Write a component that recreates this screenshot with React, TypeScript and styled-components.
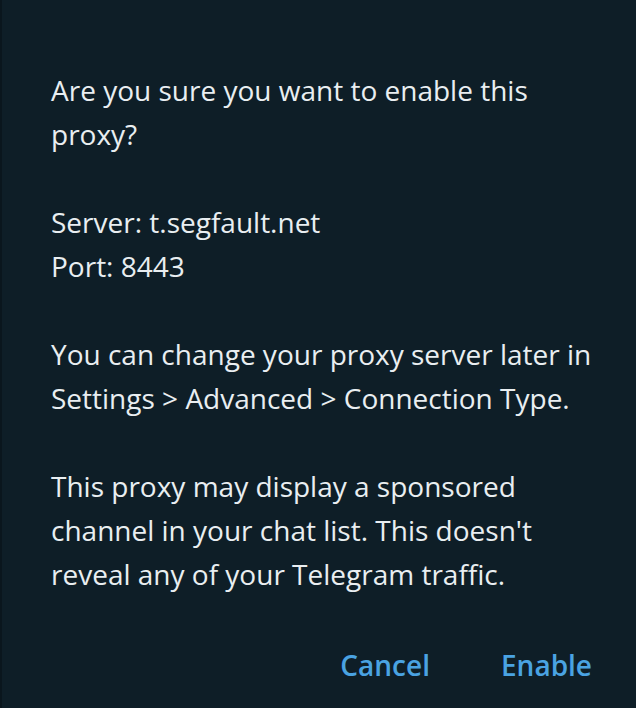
import React from "react";
import styled, { createGlobalStyle } from "styled-components";

const Global = createGlobalStyle`
  html, body { margin: 0; padding: 0; background: #0e1e27; }
  body { font-family: "Open Sans", "Noto Sans", sans-serif; }
`;

const Dialog = styled.div`
  width: 636px;
  height: 708px;
  box-sizing: border-box;
  background: #0e1e27;
  border-left: 2px solid #0a161d;
  display: flex;
  flex-direction: column;
`;

const Body = styled.div`
  padding: 68px 40px 0 49px;
  display: flex;
  flex-direction: column;
  gap: 44px;
`;

const Para = styled.p`
  margin: 0;
  font-size: 28px;
  line-height: 44px;
  color: #e9eef1;
`;

const Actions = styled.div`
  margin-top: 47px;
  display: flex;
  justify-content: flex-end;
  gap: 35px;
  padding-right: 26px;
`;

const Button = styled.button`
  background: none;
  border: none;
  padding: 0 18px;
  font-family: "Open Sans", "Noto Sans", sans-serif;
  font-size: 28px;
  font-weight: 600;
  line-height: 44px;
  color: #4aa3e2;
  cursor: pointer;
`;

export default function App() {
  return (
    <>
      <Global />
      <Dialog>
        <Body>
          <Para>Are you sure you want to enable this proxy?</Para>
          <Para>
            Server: t.segfault.net
            <br />
            Port: 8443
          </Para>
          <Para>
            You can change your proxy server later in Settings &gt; Advanced &gt; Connection Type.
          </Para>
          <Para>
            This proxy may display a sponsored channel in your chat list. This doesn't reveal any of your Telegram traffic.
          </Para>
        </Body>
        <Actions>
          <Button>Cancel</Button>
          <Button>Enable</Button>
        </Actions>
      </Dialog>
    </>
  );
}
